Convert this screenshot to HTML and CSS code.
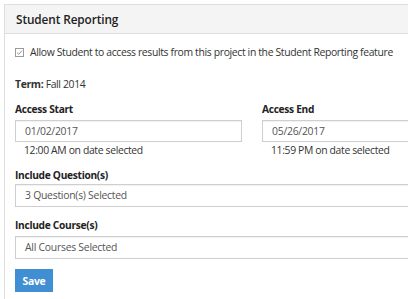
FILE: index.html
```html
<!DOCTYPE html>
<html lang="en">
<head>
    <meta charset="UTF-8">
    <title>Student Reporting</title>
    <link rel="stylesheet" href="styles.css">
</head>
<body>
    <div class="panel">
        <div class="panel-heading">Student Reporting</div>
        <div class="panel-body">
            <label class="check-row">
                <span class="check-box">
                    <svg width="9" height="9" viewBox="0 0 9 9"><rect x="0.5" y="0.5" width="8" height="8" fill="#fff" stroke="#9a9a9a"/><path d="M2 4.6 L3.8 6.3 L7 2.6" fill="none" stroke="#8a8a8a" stroke-width="0.9"/></svg>
                </span>
                <span>Allow Student to access results from this project in the Student Reporting feature</span>
            </label>
            <p class="term"><b>Term:</b> Fall 2014</p>
            <div class="dates">
                <div class="date-col">
                    <div class="field-label">Access Start</div>
                    <div class="field-box">01/02/2017</div>
                    <div class="hint">12:00 AM on date selected</div>
                </div>
                <div class="date-col end">
                    <div class="field-label">Access End</div>
                    <div class="field-box">05/26/2017</div>
                    <div class="hint">11:59 PM on date selected</div>
                </div>
            </div>
            <div class="field-label tight">Include Question(s)</div>
            <div class="field-box wide">3 Question(s) Selected</div>
            <div class="field-label">Include Course(s)</div>
            <div class="field-box wide">All Courses Selected</div>
            <button class="save-btn">Save</button>
        </div>
    </div>
</body>
</html>
```

FILE: styles.css
```css
body {
    font-family: "Open Sans", "Noto Sans", sans-serif;
    color: #333;
    background: #fff;
    margin: 0;
    padding: 4px 0 0 4px;
    overflow: hidden;
}
.panel {
    width: 440px;
    height: 320px;
    border: 1px solid #dedede;
    border-right: none;
}
.panel-heading {
    background: #f4f4f4;
    border-bottom: 1px solid #dedede;
    height: 28px;
    line-height: 28px;
    padding-left: 11px;
    font-size: 11.8px;
    font-weight: 600;
    letter-spacing: -0.1px;
    color: #222;
}
.panel-body {
    padding: 10px 0 0 10px;
}
.check-row {
    display: flex;
    align-items: center;
    gap: 6px;
    height: 16px;
    font-size: 10.4px;
    letter-spacing: -0.35px;
    white-space: nowrap;
    color: #333;
}
.check-box {
    display: flex;
}
.term {
    margin: 16px 0 0;
    font-size: 10.4px;
    letter-spacing: -0.35px;
    line-height: 16px;
}
.term b {
    font-weight: 700;
}
.dates {
    display: flex;
    margin-top: 9px;
}
.date-col {
    width: 227px;
}
.date-col.end {
    margin-left: 20px;
}
.field-label {
    font-size: 10.2px;
    letter-spacing: -0.3px;
    font-weight: 700;
    line-height: 16px;
    color: #222;
    margin-bottom: 3px;
}
.field-label.tight {
    margin-bottom: 1px;
}
.field-box {
    height: 20px;
    border: 1px solid #cfcfcf;
    box-shadow: inset 0 1px 1px rgba(0, 0, 0, 0.06);
    font-size: 10.4px;
    letter-spacing: -0.25px;
    line-height: 20px;
    padding-left: 9px;
    color: #555;
}
.date-col .field-box {
    width: 216px;
}
.end .field-box {
    width: 200px;
}
.hint {
    font-size: 10.4px;
    letter-spacing: -0.35px;
    line-height: 16px;
    padding-left: 9px;
    margin-bottom: 9px;
    white-space: nowrap;
    color: #333;
}
.field-box.wide {
    width: 420px;
    height: 21px;
    margin-bottom: 10px;
}
.save-btn {
    display: block;
    background: #3f8fd2;
    color: #fff;
    border: none;
    width: 38px;
    height: 23px;
    padding: 0;
    font-family: inherit;
    font-size: 10.4px;
    letter-spacing: -0.3px;
    font-weight: 700;
}
```
